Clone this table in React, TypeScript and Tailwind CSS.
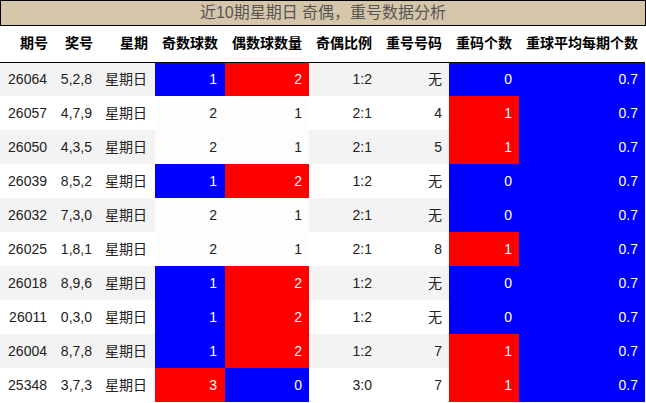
import React from 'react'

type Row = {
  qi: string
  nums: string
  odd: number
  even: number
  ratio: string
  repeat: string
  repeatCount: number
}

const rows: Row[] = [
  { qi: '26064', nums: '5,2,8', odd: 1, even: 2, ratio: '1:2', repeat: '无', repeatCount: 0 },
  { qi: '26057', nums: '4,7,9', odd: 2, even: 1, ratio: '2:1', repeat: '4', repeatCount: 1 },
  { qi: '26050', nums: '4,3,5', odd: 2, even: 1, ratio: '2:1', repeat: '5', repeatCount: 1 },
  { qi: '26039', nums: '8,5,2', odd: 1, even: 2, ratio: '1:2', repeat: '无', repeatCount: 0 },
  { qi: '26032', nums: '7,3,0', odd: 2, even: 1, ratio: '2:1', repeat: '无', repeatCount: 0 },
  { qi: '26025', nums: '1,8,1', odd: 2, even: 1, ratio: '2:1', repeat: '8', repeatCount: 1 },
  { qi: '26018', nums: '8,9,6', odd: 1, even: 2, ratio: '1:2', repeat: '无', repeatCount: 0 },
  { qi: '26011', nums: '0,3,0', odd: 1, even: 2, ratio: '1:2', repeat: '无', repeatCount: 0 },
  { qi: '26004', nums: '8,7,8', odd: 1, even: 2, ratio: '1:2', repeat: '7', repeatCount: 1 },
  { qi: '25348', nums: '3,7,3', odd: 3, even: 0, ratio: '3:0', repeat: '7', repeatCount: 1 },
]

const headers = ['期号', '奖号', '星期', '奇数球数', '偶数球数量', '奇偶比例', '重号号码', '重码个数', '重球平均每期个数']
const widths = ['w-[55px]', 'w-[45px]', 'w-[55px]', 'w-[70px]', 'w-[84px]', 'w-[70px]', 'w-[70px]', 'w-[70px]', 'w-[126px]']

// odd count colouring: 1 -> blue, 3 -> red, 2 -> plain
const oddColor = (n: number) => {
  if (n === 1) return 'bg-[#0000ff] text-white'
  if (n === 3) return 'bg-[#ff0000] text-white'
  return 'bg-[#fdfdfd]'
}

const evenColor = (n: number) => {
  if (n === 2) return 'bg-[#ff0000] text-white'
  if (n === 0) return 'bg-[#0000ff] text-white'
  return 'bg-[#fdfdfd]'
}

export default function App() {
  return (
    <div className="w-[646px] bg-white text-[14px] text-[#222] font-['Liberation_Sans','Noto_Sans_CJK_SC',sans-serif]">
      {/* Title */}
      <div className="h-[26px] border border-black bg-[#d6c6a9] flex items-center justify-center text-[16px] text-[#555]">
        近10期星期日 奇偶，重号数据分析
      </div>

      <table className="w-[645px] table-fixed border-collapse">
        <colgroup>
          {widths.map((w, i) => (
            <col key={i} className={w} />
          ))}
        </colgroup>
        <thead>
          <tr className="h-[36px] border-b border-black">
            {headers.map((h) => (
              <th key={h} className="pr-[7px] text-right font-bold text-black whitespace-nowrap">
                {h}
              </th>
            ))}
          </tr>
        </thead>
        <tbody>
          {rows.map((r, i) => {
            const bg = i % 2 === 0 ? 'bg-[#f3f3f3]' : 'bg-white'
            return (
              <tr key={r.qi} className="h-[34px]">
                <td className={`${bg} pr-[8px] text-right`}>{r.qi}</td>
                <td className={`${bg} pr-[8px] text-right`}>{r.nums}</td>
                <td className={`${bg} pr-[8px] text-right`}>星期日</td>
                <td className={`${oddColor(r.odd)} pr-[8px] text-right`}>{r.odd}</td>
                <td className={`${evenColor(r.even)} pr-[7px] text-right`}>{r.even}</td>
                <td className={`${bg} pr-[7px] text-right`}>{r.ratio}</td>
                <td className={`${bg} pr-[7px] text-right`}>{r.repeat}</td>
                <td
                  className={`${r.repeatCount === 0 ? 'bg-[#0000ff]' : 'bg-[#ff0000]'} pr-[7px] text-right text-white`}
                >
                  {r.repeatCount}
                </td>
                <td className="bg-[#0000ff] pr-[7px] text-right text-white">0.7</td>
              </tr>
            )
          })}
        </tbody>
      </table>
    </div>
  )
}
